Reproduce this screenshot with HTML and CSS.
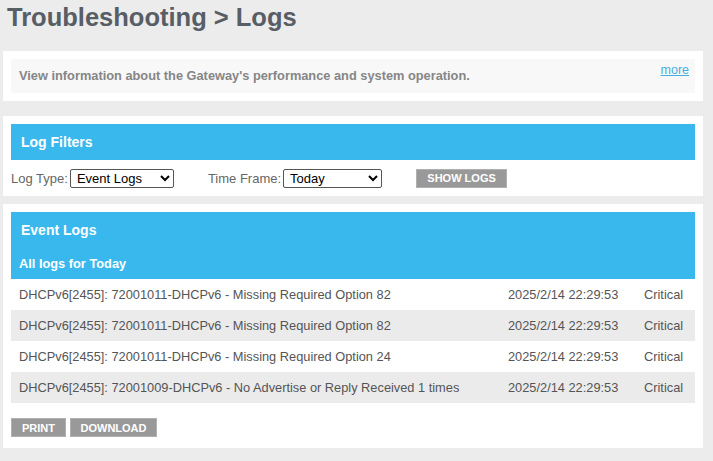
FILE: index.html
```html
<!DOCTYPE html>
<html>
<head>
<meta charset="utf-8">
<link rel="stylesheet" href="styles.css">
</head>
<body>
<h1 class="title">Troubleshooting &gt; Logs</h1>

<div class="card card-intro">
  <div class="intro">
    <p class="intro-text">View information about the Gateway's performance and system operation.</p>
    <a class="more" href="#">more</a>
  </div>
</div>

<div class="card card-filters">
  <div class="bar"><h2 class="bar-title">Log Filters</h2></div>
  <div class="filters">
    <label class="field">Log Type:
      <select class="sel sel-type"><option>Event Logs</option></select>
    </label>
    <label class="field field-time">Time Frame:
      <select class="sel sel-time"><option>Today</option></select>
    </label>
    <button class="btn btn-show">SHOW LOGS</button>
  </div>
</div>

<div class="card card-logs">
  <div class="bar bar-tall">
    <h2 class="bar-title">Event Logs</h2>
    <h3 class="bar-sub">All logs for Today</h3>
  </div>
  <table class="logs">
    <tr><td class="msg">DHCPv6[2455]: 72001011-DHCPv6 - Missing Required Option 82</td><td class="date">2025/2/14 22:29:53</td><td class="lvl">Critical</td></tr>
    <tr><td class="msg">DHCPv6[2455]: 72001011-DHCPv6 - Missing Required Option 82</td><td class="date">2025/2/14 22:29:53</td><td class="lvl">Critical</td></tr>
    <tr><td class="msg">DHCPv6[2455]: 72001011-DHCPv6 - Missing Required Option 24</td><td class="date">2025/2/14 22:29:53</td><td class="lvl">Critical</td></tr>
    <tr><td class="msg">DHCPv6[2455]: 72001009-DHCPv6 - No Advertise or Reply Received 1 times</td><td class="date">2025/2/14 22:29:53</td><td class="lvl">Critical</td></tr>
  </table>
  <div class="actions">
    <button class="btn btn-print">PRINT</button>
    <button class="btn btn-dl">DOWNLOAD</button>
  </div>
</div>
</body>
</html>
```
FILE: styles.css
```css
* { box-sizing: border-box; }
html, body { margin: 0; padding: 0; }
body {
  background: #ececec;
  font-family: "Liberation Sans", Arial, sans-serif;
  color: #555;
  padding: 0 10px 0 3px;
}
.title {
  margin: 0;
  padding: 1px 0 0 4px;
  height: 51px;
  font-size: 25.5px;
  font-weight: bold;
  color: #575e65;
  line-height: 32px;
}
.card {
  background: #fff;
  padding: 8px 8px;
  margin-bottom: 8px;
}
.card-intro { margin-bottom: 15px; }
.intro {
  background: #f8f8f8;
  height: 34px;
  display: flex;
  justify-content: space-between;
  padding: 0 6px 0 8px;
}
.intro-text {
  margin: 0;
  padding-top: 9px;
  font-size: 12.8px;
  font-weight: bold;
  color: #868686;
}
.more {
  font-size: 12.5px;
  color: #45b0e0;
  padding-top: 4px;
}
.card-filters { padding-bottom: 0; }
.bar {
  background: #39b8ee;
  color: #fff;
  height: 36px;
  padding: 0 10px;
}
.bar-title {
  margin: 0;
  font-size: 14px;
  font-weight: bold;
  line-height: 36px;
}
.bar-tall { height: 67px; padding: 0 8px; }
.bar-tall .bar-title { line-height: 36px; padding-left: 2px; }
.bar-sub {
  margin: 0;
  font-size: 12.8px;
  font-weight: bold;
  line-height: 30px;
  margin-top: 1px;
}
.filters {
  display: flex;
  align-items: center;
  height: 36px;
  font-size: 13px;
  color: #666;
}
.field { display: flex; align-items: center; gap: 2px; }
.field-time { margin-left: 34px; }
.sel {
  font-family: "Liberation Sans", Arial, sans-serif;
  font-size: 13px;
  color: #000;
  height: 19px;
  border: 1px solid #555;
  border-radius: 2px;
  background: #fff;
  padding: 0 2px;
}
.sel-type { width: 104px; }
.sel-time { width: 99px; }
.btn {
  background: #999;
  color: #fff;
  border: 1px solid #b0b0b0;
  font-family: "Liberation Sans", Arial, sans-serif;
  font-size: 11px;
  font-weight: bold;
  height: 19px;
  padding: 0;
}
.btn-show { margin-left: 34px; width: 91px; }
.logs {
  width: 100%;
  border-collapse: collapse;
  font-size: 12.8px;
  color: #555;
}
.logs td { height: 31px; padding: 0; }
.logs tr:nth-child(even) { background: #ebebeb; }
.msg { padding-left: 8px !important; }
.date { width: 136px; }
.lvl { width: 51px; }
.actions {
  display: flex;
  gap: 4px;
  padding-top: 15px;
  padding-bottom: 3px;
}
.btn-print { width: 55px; }
.btn-dl { width: 87px; }
```
